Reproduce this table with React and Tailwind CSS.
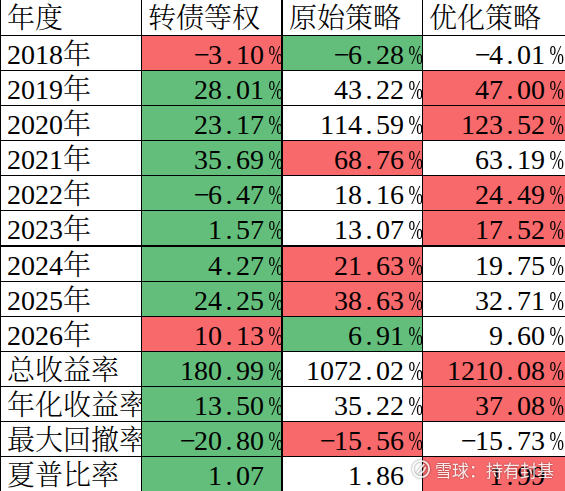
import React from "react";

const RED = "bg-[#f8696b]";
const GREEN = "bg-[#63be7b]";

const rows = [
    ["2018年", ["-3.10%", "r"], ["-6.28%", "g"], ["-4.01%", ""]],
    ["2019年", ["28.01%", "g"], ["43.22%", ""], ["47.00%", "r"]],
    ["2020年", ["23.17%", "g"], ["114.59%", ""], ["123.52%", "r"]],
    ["2021年", ["35.69%", "g"], ["68.76%", "r"], ["63.19%", ""]],
    ["2022年", ["-6.47%", "g"], ["18.16%", ""], ["24.49%", "r"]],
    ["2023年", ["1.57%", "g"], ["13.07%", ""], ["17.52%", "r"]],
    ["2024年", ["4.27%", "g"], ["21.63%", "r"], ["19.75%", ""]],
    ["2025年", ["24.25%", "g"], ["38.63%", "r"], ["32.71%", ""]],
    ["2026年", ["10.13%", "r"], ["6.91%", "g"], ["9.60%", ""]],
    ["总收益率", ["180.99%", "g"], ["1072.02%", ""], ["1210.08%", "r"]],
    ["年化收益率", ["13.50%", "g"], ["35.22%", ""], ["37.08%", "r"]],
    ["最大回撤率", ["-20.80%", "g"], ["-15.56%", "r"], ["-15.73%", ""]],
    ["夏普比率", ["1.07", "g"], ["1.86", ""], ["1.99", "r"]],
];

const fill = (c) => (c === "r" ? RED : c === "g" ? GREEN : "bg-white");

// SimSun-like half-width glyph cells
function Num({ value }) {
    const chars = value.endsWith("%") ? value.split("") : [...value.split(""), " "];
    return (
        <span className="flex">
            {chars.map((ch, i) => (
                <span key={i} className="inline-block w-[14px] text-center overflow-visible">
                    {ch === "%" ? (
                        <span className="inline-block scale-x-[0.62] origin-center">%</span>
                    ) : ch === "-" ? (
                        "−"
                    ) : ch === " " ? (
                        "\u00a0"
                    ) : (
                        ch
                    )}
                </span>
            ))}
        </span>
    );
}

function Watermark() {
    return (
        <div className="absolute left-[411px] top-[459px] flex items-center gap-[4px] opacity-85 pointer-events-none">
            <svg width="20" height="20" viewBox="0 0 20 20" className="drop-shadow-[0_0_1px_rgba(0,0,0,0.6)]">
                <circle cx="10" cy="10" r="8.2" fill="none" stroke="#fff" strokeWidth="1.8" />
                <path d="M6 14 L13 5" stroke="#fff" strokeWidth="1.8" fill="none" />
                <path d="M8.5 15 Q13 13 14.5 8" stroke="#fff" strokeWidth="1.6" fill="none" />
            </svg>
            <span
                className="text-[17px] leading-none text-white [text-shadow:0_0_2px_rgba(0,0,0,0.55)]"
                style={{ fontFamily: '"Noto Sans CJK SC", sans-serif' }}
            >
                雪球：持有封基
            </span>
        </div>
    );
}

export default function App() {
    const font = { fontFamily: '"Liberation Serif", "Noto Serif CJK SC", "Noto Sans CJK SC", serif' };
    return (
        <div className="relative w-[565px] h-[491px] overflow-hidden bg-white text-black" style={font}>
            <div className="grid grid-cols-[142px_141px_140px_142px] text-[28px] leading-none">
                {["年度", "转债等权", "原始策略", "优化策略"].map((h, i) => (
                    <div
                        key={h}
                        className={
                            "h-[36px] flex items-center pl-[6px] pt-[3px] border-b border-black overflow-hidden whitespace-nowrap font-light " +
                            (i === 0 ? "border-l border-r " : i === 1 ? "border-r-2 " : i === 2 ? "border-r " : "")
                        }
                    >
                        {h}
                    </div>
                ))}
                {rows.map((r, ri) => {
                    const bottom = ri === 5 ? "border-b-2 h-[36px] " : "border-b h-[35px] ";
                    return (
                        <React.Fragment key={r[0]}>
                            <div
                                className={
                                    "flex items-center pl-[6px] pt-[4px] border-black border-l border-r overflow-hidden whitespace-nowrap font-light " +
                                    bottom
                                }
                            >
                                {r[0]}
                            </div>
                            {r.slice(1).map(([v, c], ci) => (
                                <div
                                    key={ci}
                                    className={
                                        "flex items-center justify-end pt-[4px] border-black " +
                                        bottom +
                                        fill(c) +
                                        (ci === 0 ? " border-r-2 pr-[3px]" : ci === 1 ? " border-r pr-[4px]" : " pr-[6px]")
                                    }
                                >
                                    <Num value={v} />
                                </div>
                            ))}
                        </React.Fragment>
                    );
                })}
            </div>
            <Watermark />
        </div>
    );
}
